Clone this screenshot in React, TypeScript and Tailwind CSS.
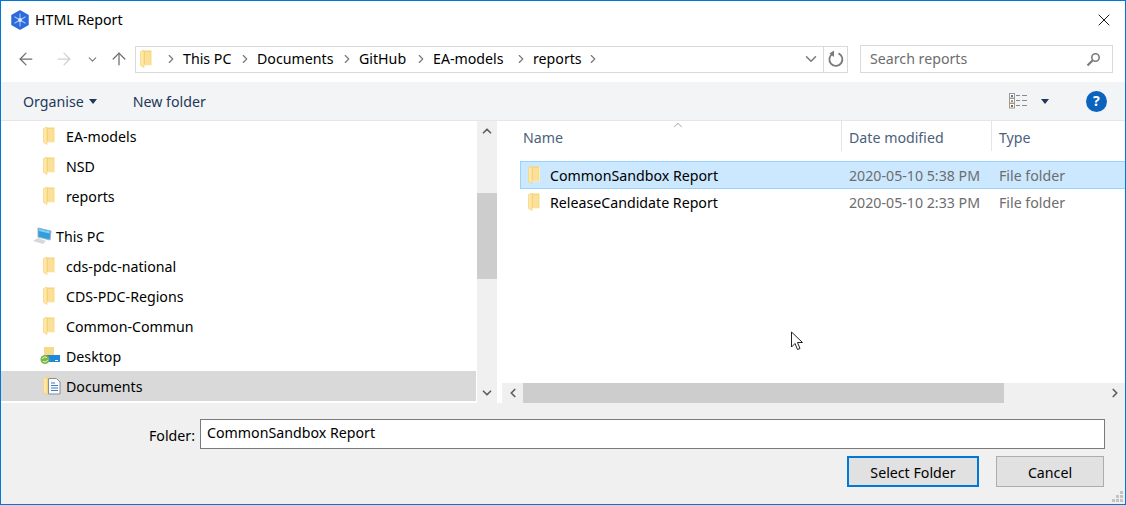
import { ArrowLeft, ArrowRight, ArrowUp, ChevronDown, ChevronLeft, ChevronRight, ChevronUp, X } from 'lucide-react';

function FolderIcon() {
  return (
    <svg width="14" height="18" viewBox="0 0 14 18" className="shrink-0">
      <path d="M2 0.500h9.500V15H2z" fill="#f6d57e" />
      <path d="M5 2h5.500v12H5z" fill="#fbe09a" />
      <path d="M11 0.500h1V15.500H3.500V14.500H11z" fill="#ffeebb" />
      <path d="M0.500 1.500L4 0.500V17.500L0.500 15.500z" fill="#ffe8a6" stroke="#f3cf74" strokeWidth="0.600" />
    </svg>
  );
}

function ThisPcIcon() {
  return (
    <svg width="20" height="18" viewBox="0 0 20 18" className="shrink-0">
      <path d="M6 1l13 3-1 9-12-3z" fill="#2f9fe0" stroke="#9fb3c4" strokeWidth="1" />
      <path d="M7 2l11 2.500-.6 2L7 4z" fill="#7fd0f5" />
      <path d="M1 14l5-3 8 3-3 3z" fill="#d5d8dc" />
    </svg>
  );
}

function DesktopIcon() {
  return (
    <svg width="20" height="18" viewBox="0 0 20 18" className="shrink-0">
      <path d="M4 0h10v10H4z" fill="#f8d985" />
      <rect x="6" y="8" width="14" height="7" fill="#1f88d8" />
      <rect x="15" y="13" width="3" height="1" fill="#ffffff" />
      <circle cx="5" cy="12.500" r="4.500" fill="#7ab648" />
      <path d="M2.500 12a2.600 2.600 0 0 1 4.600-1M7.500 13a2.600 2.600 0 0 1-4.600 1" fill="none" stroke="#e6f4d2" strokeWidth="1" />
    </svg>
  );
}

function DocumentsIcon() {
  return (
    <svg width="18" height="18" viewBox="0 0 18 18" className="shrink-0">
      <path d="M2 0.500h9V15H2z" fill="#f6d57e" />
      <path d="M0.500 1.500L4 0.500V17.500L0.500 15.500z" fill="#ffe8a6" stroke="#f3cf74" strokeWidth="0.600" />
      <path d="M5.500 1.500h8l3.500 3.500v12H5.500z" fill="#fafafa" stroke="#8a8f96" />
      <path d="M8 6h4M8 8.500h7M8 11h7M8 13.500h7" stroke="#3b7fc4" strokeWidth="1" />
    </svg>
  );
}

function AppLogo() {
  return (
    <svg width="18" height="20" viewBox="0 0 18 20" className="shrink-0">
      <path d="M9 1l8 4.500v9L9 19l-8-4.500v-9z" fill="#2c6bdc" stroke="#2c6bdc" strokeWidth="1.500" strokeLinejoin="round" />
      <path d="M9 3.500v13M3.500 6.800l11 6.400M14.500 6.800l-11 6.400" stroke="#a5c4f3" strokeWidth="1.100" />
      <circle cx="9" cy="10" r="2" fill="#dbe8fb" />
    </svg>
  );
}

function SearchGlass() {
  return (
    <svg width="15" height="15" viewBox="0 0 15 15" className="shrink-0">
      <circle cx="9.500" cy="5.500" r="3.700" fill="none" stroke="#7a7a7a" strokeWidth="1.600" />
      <path d="M6.500 8.500L1.500 13.500" stroke="#7a7a7a" strokeWidth="2.200" />
    </svg>
  );
}

function RefreshIcon() {
  return (
    <svg width="16" height="18" viewBox="0 0 16 18">
      <path d="M10.500 3.400A6.500 6.500 0 1 1 4.500 3.800" fill="none" stroke="#7a7a7a" strokeWidth="1.800" />
      <path d="M6 0.500V7L1.500 3.500z" fill="#7a7a7a" />
    </svg>
  );
}

function ViewIcon() {
  return (
    <svg width="18" height="16" viewBox="0 0 18 16">
      <rect x="0.500" y="0.500" width="5" height="4.500" fill="#fff" stroke="#9a9a9a" />
      <rect x="0.500" y="5.500" width="5" height="4.500" fill="#fff" stroke="#9a9a9a" />
      <rect x="0.500" y="10.500" width="5" height="4.500" fill="#fff" stroke="#9a9a9a" />
      <rect x="2" y="2" width="2" height="2" fill="#4a7fb5" />
      <rect x="2" y="7" width="2" height="2" fill="#b59a3a" />
      <rect x="2" y="12" width="2" height="2" fill="#b5502a" />
      <path d="M7 2.500h4M13 2.500h5M7 7.500h4M13 7.500h5M7 12.500h4M13 12.500h5" stroke="#8a8a8a" />
    </svg>
  );
}

function Caret() {
  return (
    <svg width="8" height="5" viewBox="0 0 8 5">
      <path d="M0 0h8L4 5z" fill="#1e395b" />
    </svg>
  );
}

function Cursor() {
  return (
    <svg width="14" height="20" viewBox="0 0 14 20" className="absolute left-[789px] top-[330px]">
      <path d="M1.500 1v15l3.500-3.500 2.500 6 2.500-1-2.500-6h5z" fill="#fff" stroke="#222" strokeWidth="1" />
    </svg>
  );
}

function Grip() {
  return (
    <svg width="12" height="12" viewBox="0 0 12 12" className="absolute right-[1px] bottom-[1px]">
      <path d="M8 0h3v3H8zM4 4h3v3H4zM8 4h3v3H8zM0 8h3v3H0zM4 8h3v3H4zM8 8h3v3H8z" fill="#c4c4c4" />
    </svg>
  );
}

function NavRow({ label, icon, selected }: { label: string; icon?: React.ReactNode; selected?: boolean }) {
  return (
    <div className={`h-[30px] flex items-center ${selected ? 'bg-[#d9d9d9]' : ''}`}>
      <div className="w-[65px] pl-[42px] flex justify-start">{icon ?? <FolderIcon />}</div>
      <span className="pt-[2px] text-black">{label}</span>
    </div>
  );
}

function Crumb({ label, width }: { label: string; width: string }) {
  return (
    <div className={`${width} shrink-0 flex items-center justify-between pr-[5px]`}>
      <span>{label}</span>
      <ChevronRight size={14} strokeWidth={2} className="text-[#7a7a7a]" />
    </div>
  );
}

const files = [
  { name: 'CommonSandbox Report', date: '2020-05-10 5:38 PM', selected: true },
  { name: 'ReleaseCandidate Report', date: '2020-05-10 2:33 PM', selected: false },
];

export default function App() {
  return (
    <div
      className="relative w-[1126px] h-[505px] flex flex-col overflow-hidden bg-white border border-[#0078d7] text-[14.2px] leading-5"
      style={{ fontFamily: '"Noto Sans", "Open Sans", sans-serif' }}
    >
      {/* title bar */}
      <div className="h-[37px] shrink-0 flex items-center pl-[10px] pr-[11px]">
        <AppLogo />
        <span className="ml-[6px] text-black">HTML Report</span>
        <X className="ml-auto text-black" size={20} strokeWidth={1.1} />
      </div>

      {/* address row */}
      <div className="h-[44px] shrink-0 flex items-center pb-[2px] pl-[15px] pr-[12px]">
        <ArrowLeft size={20} strokeWidth={1.5} className="text-[#6d6d6d]" />
        <ArrowRight size={20} strokeWidth={1.5} className="ml-[18px] text-[#cfcfcf]" />
        <ChevronDown size={13} strokeWidth={2} className="ml-[12px] text-[#7a7a7a]" />
        <ArrowUp size={20} strokeWidth={1.5} className="ml-[10px] text-[#6d6d6d]" />
        <div className="ml-[6px] h-[27px] w-[713px] flex items-center border border-[#d9d9d9] pl-[4px]">
          <FolderIcon />
          <ChevronRight size={14} strokeWidth={2} className="ml-[10px] text-[#7a7a7a]" />
          <div className="w-[5px] shrink-0" />
          <Crumb label="This PC" width="w-[74px]" />
          <Crumb label="Documents" width="w-[102px]" />
          <Crumb label="GitHub" width="w-[74px]" />
          <Crumb label="EA-models" width="w-[100px]" />
          <Crumb label="reports" width="w-[72px]" />
          <ChevronDown size={18} strokeWidth={2} className="ml-auto mr-[3px] text-[#7a7a7a]" />
          <div className="h-full w-[24px] border-l border-[#d9d9d9] flex items-center justify-center">
            <RefreshIcon />
          </div>
        </div>
        <div className="ml-[12px] h-[28px] w-[253px] flex items-center border border-[#d9d9d9] pl-[9px] pr-[11px]">
          <span className="text-[#6d6d6d]">Search reports</span>
          <span className="ml-auto flex"><SearchGlass /></span>
        </div>
      </div>

      {/* toolbar */}
      <div className="h-[39px] shrink-0 flex items-center bg-[#f3f4f6] border-b border-[#e6e6e6] pl-[22px] pr-[18px] text-[#1e395b]">
        <span className="pt-[2px]">Organise</span>
        <span className="ml-[5px] flex"><Caret /></span>
        <span className="ml-[36px] pt-[2px]">New folder</span>
        <span className="ml-auto flex"><ViewIcon /></span>
        <span className="ml-[14px] flex"><Caret /></span>
        <div className="ml-[37px] w-[21px] h-[21px] rounded-full bg-[#0a63bd] text-white font-bold flex items-center justify-center">?</div>
      </div>

      {/* main panes */}
      <div className="h-[282px] shrink-0 flex">
        <div className="w-[475px] shrink-0 pb-[2px]">
          <NavRow label="EA-models" />
          <NavRow label="NSD" />
          <NavRow label="reports" />
          <div className="h-[10px]" />
          <div className="h-[30px] flex items-center pl-[31px]">
            <ThisPcIcon />
            <span className="ml-[4px] pt-[2px]">This PC</span>
          </div>
          <NavRow label="cds-pdc-national" />
          <NavRow label="CDS-PDC-Regions" />
          <NavRow label="Common-Commun" />
          <NavRow label="Desktop" icon={<div className="-ml-[3px]"><DesktopIcon /></div>} />
          <NavRow label="Documents" icon={<DocumentsIcon />} selected />
        </div>

        {/* nav scrollbar */}
        <div className="w-[20px] shrink-0 ml-px bg-[#f0f0f0] flex flex-col items-center">
          <div className="h-[20px] flex items-center"><ChevronUp size={14} strokeWidth={3} className="text-[#606060]" /></div>
          <div className="mt-[52px] h-[86px] w-full bg-[#cdcdcd]" />
          <div className="mt-auto h-[20px] flex items-center"><ChevronDown size={14} strokeWidth={3} className="text-[#606060]" /></div>
        </div>
        <div className="w-[5px] shrink-0" />

        {/* file list */}
        <div className="flex-1 min-w-0 flex flex-col">
          <div className="h-[40px] shrink-0 flex relative text-[#4c607a]">
            <ChevronUp size={14} strokeWidth={1.2} className="absolute left-[169px] -top-[3px] text-[#7a7a7a]" />
            <div className="w-[340px] pl-[21px] pt-[7px] border-r border-[#e5e5e5] h-[30px]">Name</div>
            <div className="w-[150px] pl-[7px] pt-[7px] border-r border-[#e5e5e5] h-[30px]">Date modified</div>
            <div className="pl-[7px] pt-[7px]">Type</div>
          </div>
          <div className="flex-1 min-h-0 pl-[18px]">
            {files.map((file) => (
              <div
                key={file.name}
                className={`flex items-center border ${file.selected ? 'h-[28px] bg-[#cce8ff] border-[#99d1ff] border-r-0' : 'h-[26px] border-transparent'}`}
              >
                <div className="w-[29px] pl-[7px]"><FolderIcon /></div>
                <span className="w-[299px] pt-[2px] text-black">{file.name}</span>
                <span className="w-[150px] pt-[2px] text-[#6d6d6d]">{file.date}</span>
                <span className="pt-[2px] text-[#6d6d6d]">File folder</span>
              </div>
            ))}
          </div>
          <div className="h-[20px] shrink-0 flex items-center bg-[#f0f0f0]">
            <div className="w-[21px] flex justify-center"><ChevronLeft size={14} strokeWidth={3} className="text-[#606060]" /></div>
            <div className="w-[481px] h-full bg-[#cdcdcd]" />
            <div className="ml-auto w-[21px] flex justify-center"><ChevronRight size={14} strokeWidth={3} className="text-[#606060]" /></div>
          </div>
        </div>
      </div>

      {/* footer */}
      <div className="flex-1 min-h-0 bg-[#f0f0f0] flex flex-col pt-[16px] pl-[148px] pr-[20px]">
        <div className="flex items-center">
          <span className="w-[51px] pt-[4px] shrink-0 text-black">Folder:</span>
          <div className="flex-1 h-[30px] bg-white border border-[#7a7a7a] flex items-center pl-[6px] pb-[2px] text-black">CommonSandbox Report</div>
        </div>
        <div className="mt-[7px] pr-px flex justify-end gap-[17px] text-black">
          <button className="w-[132px] h-[31px] pt-[2px] bg-[#e1e1e1] border-2 border-[#0078d7]">Select Folder</button>
          <button className="w-[108px] h-[31px] pt-[2px] bg-[#e1e1e1] border border-[#adadad]">Cancel</button>
        </div>
      </div>

      <Grip />
      <Cursor />
    </div>
  );
}
